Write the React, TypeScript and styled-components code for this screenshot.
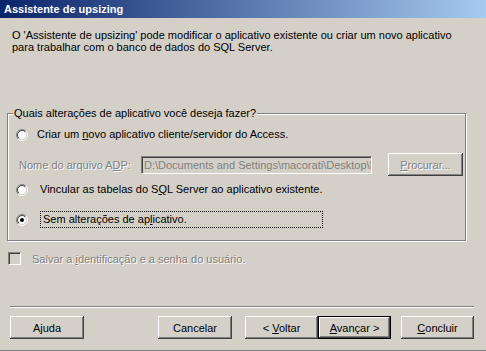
import React from 'react';
import styled, { createGlobalStyle } from 'styled-components';

const GlobalStyle = createGlobalStyle`
  html, body {
    margin: 0;
    padding: 0;
    background: #d4d0c8;
  }
  body {
    font-family: "Liberation Sans", Arial, sans-serif;
    font-size: 11px;
    color: #000;
  }
`;

const Window = styled.div`
  box-sizing: border-box;
  width: 486px;
  height: 351px;
  background: #d4d0c8;
  border-bottom: 1px solid #808080;
  display: flex;
  flex-direction: column;
  overflow: hidden;
`;

const TitleBar = styled.div`
  height: 18px;
  flex: none;
  display: flex;
  align-items: center;
  padding-left: 4px;
  background: linear-gradient(to right, #0a246a 0%, #a6caf0 100%);
  color: #fff;
  font-weight: bold;
  font-size: 11px;
`;

const Intro = styled.p`
  margin: 11px 0 0 12px;
  line-height: 12px;
`;

const Group = styled.div`
  position: relative;
  box-sizing: border-box;
  margin: 60px 0 0 7px;
  width: 459px;
  height: 128px;
  border: 1px solid #808080;
  box-shadow: inset 1px 1px #fff, 1px 1px #fff;
  padding: 12px 0 0 8px;
  display: flex;
  flex-direction: column;
`;

const Legend = styled.span`
  position: absolute;
  top: -8px;
  left: 5px;
  padding: 0 1px;
  line-height: 14px;
  background: #d4d0c8;
`;

const OptionRow = styled.div<{ $top: number }>`
  display: flex;
  align-items: center;
  height: 17px;
  margin-top: ${(p) => p.$top}px;
`;

const OptionLabel = styled.span<{ $indent: number; $focused?: boolean }>`
  margin-left: ${(p) => p.$indent}px;
  height: 17px;
  line-height: 17px;
  padding: 0 3px;
  box-sizing: border-box;
  white-space: nowrap;
  outline: ${(p) => (p.$focused ? '1px dotted #000' : 'none')};
  outline-offset: -1px;
  width: ${(p) => (p.$focused ? '283px' : 'auto')};
`;

const FileRow = styled.div`
  display: flex;
  align-items: center;
  margin-top: 12px;
  padding-left: 3px;
  height: 19px;
`;

const Disabled = styled.span`
  color: #808080;
  text-shadow: 1px 1px #fff;
  white-space: nowrap;
`;

const FileLabel = styled(Disabled)`
  width: 122px;
  flex: none;
`;

const FileInput = styled.div`
  box-sizing: border-box;
  flex: none;
  width: 231px;
  height: 18px;
  border-top: 1px solid #808080;
  border-left: 1px solid #808080;
  border-right: 1px solid #fff;
  border-bottom: 1px solid #fff;
  box-shadow: inset 1px 1px #404040, inset -1px -1px #d4d0c8;
  padding: 0 2px;
  line-height: 16px;
  color: #808080;
  white-space: nowrap;
  overflow: hidden;
`;

const Button = styled.div<{ $w?: number; $default?: boolean; $disabled?: boolean }>`
  box-sizing: border-box;
  width: ${(p) => p.$w ?? 74}px;
  height: 23px;
  flex: none;
  display: flex;
  align-items: center;
  justify-content: center;
  white-space: nowrap;
  background: #d4d0c8;
  border: ${(p) => (p.$default ? '1px solid #000' : 'none')};
  box-shadow: inset -1px -1px #404040, inset 1px 1px #fff, inset -2px -2px #808080,
    inset 2px 2px #d4d0c8;
  color: ${(p) => (p.$disabled ? '#808080' : '#000')};
  text-shadow: ${(p) => (p.$disabled ? '1px 1px #fff' : 'none')};
`;

const CheckRow = styled.div`
  display: flex;
  align-items: center;
  margin: 11px 0 0 8px;
  height: 13px;
`;

const CheckBox = styled.div`
  box-sizing: border-box;
  width: 13px;
  height: 13px;
  flex: none;
  border-top: 1px solid #808080;
  border-left: 1px solid #808080;
  border-right: 1px solid #fff;
  border-bottom: 1px solid #fff;
  box-shadow: inset 1px 1px #404040, inset -1px -1px #d4d0c8;
  background: #d4d0c8;
`;

const CheckLabel = styled(Disabled)`
  margin-left: 11px;
`;

const Separator = styled.div`
  margin: 41px 0 0 10px;
  width: 464px;
  height: 1px;
  background: #808080;
  box-shadow: 0 1px #fff;
`;

const ButtonBar = styled.div`
  display: flex;
  margin: 9px 0 0 10px;
`;

const Gap = styled.div<{ $w: number }>`
  width: ${(p) => p.$w}px;
  flex: none;
`;

const Key = styled.span`
  text-decoration: underline;
  text-underline-offset: 1px;
`;

const Radio: React.FC<{ checked?: boolean }> = ({ checked }) => (
  <svg width="12" height="12" viewBox="0 0 12 12" style={{ flex: 'none' }}>
    <defs>
      <clipPath id="rtl">
        <polygon points="0,0 12,0 0,12" />
      </clipPath>
      <clipPath id="rbr">
        <polygon points="12,0 12,12 0,12" />
      </clipPath>
    </defs>
    <circle cx="6" cy="6" r="5.5" fill="none" stroke="#808080" clipPath="url(#rtl)" />
    <circle cx="6" cy="6" r="5.5" fill="none" stroke="#fff" clipPath="url(#rbr)" />
    <circle cx="6" cy="6" r="4.5" fill="#fff" stroke="#404040" clipPath="url(#rtl)" />
    <circle cx="6" cy="6" r="4.5" fill="#fff" stroke="#d4d0c8" clipPath="url(#rbr)" />
    {checked && <circle cx="6" cy="6" r="2" fill="#000" />}
  </svg>
);

export default function App() {
  return (
    <>
      <GlobalStyle />
      <Window>
        <TitleBar>Assistente de upsizing</TitleBar>
        <Intro>
          O 'Assistente de upsizing' pode modificar o aplicativo existente ou criar um novo aplicativo
          <br />
          para trabalhar com o banco de dados do SQL Server.
        </Intro>
        <Group>
          <Legend>Quais alterações de aplicativo você deseja fazer?</Legend>
          <OptionRow $top={0}>
            <Radio />
            <OptionLabel $indent={6}>
              Criar um <Key>n</Key>ovo aplicativo cliente/servidor do Access.
            </OptionLabel>
          </OptionRow>
          <FileRow>
            <FileLabel>
              Nome do arquivo A<Key>D</Key>P:
            </FileLabel>
            <FileInput>D:\Documents and Settings\macorati\Desktop\Northwind</FileInput>
            <Gap $w={16} />
            <Button $w={75} $disabled>
              <span>
                <Key>P</Key>rocurar...
              </span>
            </Button>
          </FileRow>
          <OptionRow $top={7}>
            <Radio />
            <OptionLabel $indent={9}>
              Vincular as tabelas do S<Key>Q</Key>L Server ao aplicativo existente.
            </OptionLabel>
          </OptionRow>
          <OptionRow $top={13}>
            <Radio checked />
            <OptionLabel $indent={12} $focused>
              Sem alterações de ap<Key>l</Key>icativo.
            </OptionLabel>
          </OptionRow>
        </Group>
        <CheckRow>
          <CheckBox />
          <CheckLabel>
            Salvar a <Key>i</Key>dentificação e a senha do usuário.
          </CheckLabel>
        </CheckRow>
        <Separator />
        <ButtonBar>
          <Button>Ajuda</Button>
          <Gap $w={74} />
          <Button>Cancelar</Button>
          <Gap $w={13} />
          <Button $w={73}>
            <span>
              &lt; <Key>V</Key>oltar
            </span>
          </Button>
          <Button $w={73} $default>
            <span>
              <Key>A</Key>vançar &gt;
            </span>
          </Button>
          <Gap $w={10} />
          <Button $w={73}>
            <span>
              <Key>C</Key>oncluir
            </span>
          </Button>
        </ButtonBar>
      </Window>
    </>
  );
}
